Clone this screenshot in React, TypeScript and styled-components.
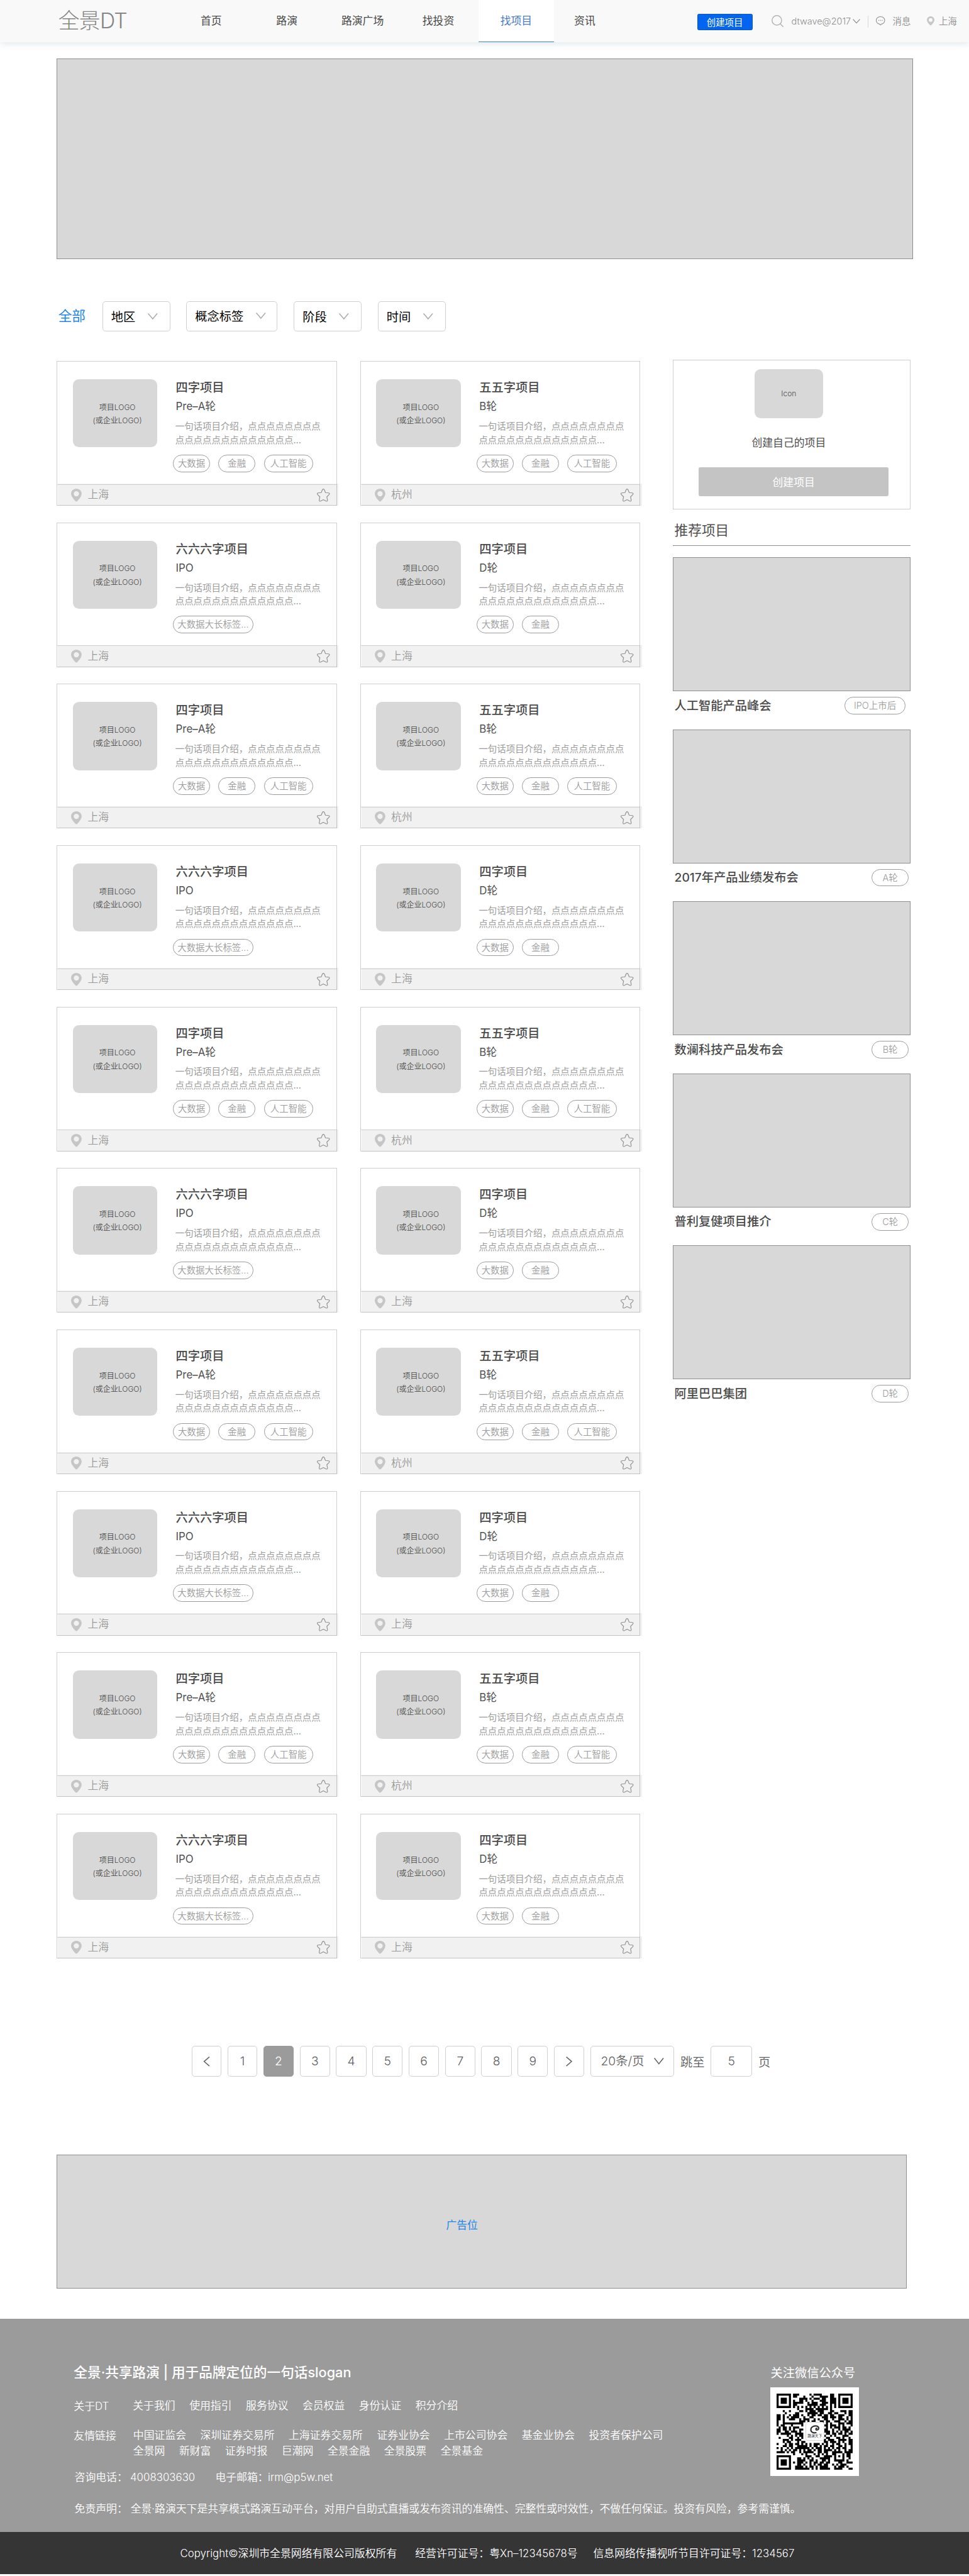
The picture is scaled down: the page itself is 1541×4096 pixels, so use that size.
import React from "react";
import styled, { createGlobalStyle } from "styled-components";

const u = (n: number) => `${Math.round(n * 60.19) / 100}px`;

const Global = createGlobalStyle`
  * { box-sizing: border-box; }
  body {
    margin: 0;
    background: #fff;
    color: #4f4f4f;
    font-family: Inter, "Noto Sans CJK SC", "Liberation Sans", sans-serif;
    overflow-x: hidden;
  }
`;

const Page = styled.div`
  width: 1541px;
  height: 4096px;
  overflow: hidden;
  display: flex;
  flex-direction: column;
  background: #fff;
`;

/* ---------- header ---------- */
const Header = styled.header`
  display: flex;
  flex: none;
  height: ${u(112)};
  background: #f9f9f9;
  box-shadow: 0 ${u(6)} ${u(16)} rgba(190, 208, 220, 0.42);
`;
const Brand = styled.div`
  width: ${u(458)};
  padding-left: ${u(154)};
  font-size: ${u(56)};
  line-height: ${u(108)};
  font-weight: 300;
  color: #858585;
  letter-spacing: ${u(-1)};
  white-space: nowrap;
`;
const Tab = styled.a<{ $w: number; $active?: boolean; $gap?: number }>`
  width: ${(p) => u(p.$w)};
  height: ${u(112)};
  margin-left: ${(p) => u(p.$gap ?? 0)};
  text-align: center;
  font-size: ${u(28)};
  line-height: ${u(112)};
  color: ${(p) => (p.$active ? "#4a7bc8" : "#4a4a4a")};
  background: ${(p) => (p.$active ? "#fff" : "transparent")};
  border-bottom: ${(p) => (p.$active ? "1px solid #4a7ecb" : "none")};
`;
const CreateButton = styled.button`
  margin: ${u(37)} 0 0 ${u(216)};
  width: ${u(146)};
  height: ${u(43)};
  padding: 0;
  border: 1px solid #1257b4;
  border-radius: ${u(4)};
  background: #0265f0;
  color: #fff;
  font: 400 ${u(24)} / ${u(42)} Inter, "Noto Sans CJK SC", sans-serif;
`;
const HeaderTools = styled.div`
  display: flex;
  align-items: center;
  height: ${u(112)};
  margin-left: ${u(50)};
  color: #8f8f8f;
  font-size: ${u(24)};
  font-weight: 350;
  white-space: nowrap;
`;
const ToolText = styled.span<{ $w: number; $ml: number }>`
  width: ${(p) => u(p.$w)};
  margin-left: ${(p) => u(p.$ml)};
  line-height: ${u(110)};
`;
const ToolDivider = styled.i<{ $ml: number }>`
  width: 1px;
  height: ${u(32)};
  margin-left: ${(p) => u(p.$ml)};
  margin-top: ${u(3)};
  background: #d8d8d8;
`;
const Icon = styled.svg<{ $w: number; $h: number; $ml?: number; $mt?: number }>`
  flex: none;
  display: block;
  width: ${(p) => u(p.$w)};
  height: ${(p) => u(p.$h)};
  margin-left: ${(p) => u(p.$ml ?? 0)};
  margin-top: ${(p) => u(p.$mt ?? 0)};
  overflow: visible;
`;

/* ---------- placeholders and filters ---------- */
const Banner = styled.div`
  flex: none;
  margin: ${u(42)} 0 0 ${u(150)};
  width: ${u(2262)};
  height: ${u(530)};
  border: 1px solid #8f8f8f;
  background: #d8d8d8;
`;
const Filters = styled.div`
  display: flex;
  flex: none;
  align-items: center;
  height: ${u(80)};
  margin: ${u(112)} 0 0 ${u(154)};
`;
const FilterAll = styled.span`
  width: ${u(116)};
  font-size: ${u(36)};
  line-height: ${u(76)};
  color: #1e86e8;
`;
const FilterBox = styled.div<{ $w: number; $gap: number; $lift?: number }>`
  display: flex;
  align-items: center;
  justify-content: space-between;
  width: ${(p) => u(p.$w)};
  height: ${u(80)};
  margin-right: ${(p) => u(p.$gap)};
  padding: 0 ${(p) => u(p.$w > 200 ? 28 : 32)} ${(p) => u(p.$lift ?? 0)} ${u(22)};
  border: 1px solid #cfcfcf;
  border-radius: ${u(8)};
  color: #000;
  font-size: ${u(32)};
`;

/* ---------- project cards ---------- */
const Main = styled.main`
  display: flex;
  flex: none;
  align-items: flex-start;
  margin: ${u(74)} 0 0 ${u(150)};
`;
const CardGrid = styled.section`
  display: grid;
  grid-template-columns: ${u(740)} ${u(740)};
  grid-auto-rows: ${u(382)};
  column-gap: ${u(62)};
  row-gap: ${u(44.4)};
  margin-top: ${u(4)};
`;
const Card = styled.article`
  display: flex;
  flex-direction: column;
  border: 1px solid #cfcfcf;
`;
const CardBody = styled.div`
  display: flex;
  height: ${u(325)};
  padding: ${u(46.4)} 0 0 ${u(40.4)};
  border-bottom: 1px solid #dcdcdc;
`;
const LogoBox = styled.div`
  width: ${u(224)};
  height: ${u(180)};
  padding: ${u(56)} 0 0 ${u(12)};
  border-radius: ${u(16)};
  background: #d8d8d8;
  color: #4a4a4a;
  font-size: ${u(20)};
  font-weight: 350;
  line-height: ${u(35.5)};
  text-align: center;
  white-space: pre;
`;
const Info = styled.div`
  display: flex;
  flex-direction: column;
  margin-left: ${u(41)};
`;
const CardTitle = styled.h3`
  margin: 0 0 0 ${u(7.5)};
  font-size: ${u(32)};
  line-height: ${u(44)};
  font-weight: 500;
  color: #4a4a4a;
`;
const Stage = styled.div`
  margin: ${u(6)} 0 0 ${u(7.5)};
  font-size: ${u(28)};
  line-height: ${u(44)};
`;
const Desc = styled.p`
  margin: ${u(12)} 0 0 ${u(6)};
  color: #9b9b9b;
  font-size: ${u(24)};
  line-height: ${u(36)};
  font-weight: 400;
  white-space: pre;
`;
const Tags = styled.div`
  display: flex;
  gap: ${u(22)};
  margin-top: ${u(21)};
`;
const Tag = styled.span<{ $w: number }>`
  width: ${(p) => u(p.$w)};
  height: ${u(46)};
  border: 1px solid #9b9b9b;
  border-radius: ${u(23)};
  color: #9b9b9b;
  font-size: ${u(24)};
  font-weight: 350;
  line-height: ${u(42)};
  text-align: center;
  white-space: nowrap;
`;
const CardFoot = styled.footer`
  display: flex;
  align-items: center;
  flex: 1;
  margin: ${u(-3)} ${u(-6)} -1px ${u(2)};
  padding: ${u(1)} ${u(23)} 0 ${u(34)};
  background: rgba(0, 0, 0, 0.055);
`;
const City = styled.span`
  flex: 1;
  margin-left: ${u(16)};
  color: #999;
  font-size: ${u(28)};
  font-weight: 350;
  line-height: ${u(56)};
`;

/* ---------- sidebar ---------- */
const Side = styled.aside`
  width: ${u(628)};
  margin-left: ${u(86)};
`;
const CreatePanel = styled.div`
  display: flex;
  flex-direction: column;
  align-items: center;
  height: ${u(396)};
  padding-top: ${u(24)};
  border: 1px solid #cfcfcf;
`;
const IconBox = styled.div`
  width: ${u(180)};
  height: ${u(130)};
  margin-right: ${u(16)};
  border-radius: ${u(16)};
  background: #d8d8d8;
  font-size: ${u(20)};
  font-weight: 350;
  line-height: ${u(130)};
  text-align: center;
`;
const CreateHint = styled.div`
  margin: ${u(42)} ${u(16)} 0 0;
  font-size: ${u(28)};
  line-height: ${u(44)};
`;
const PanelButton = styled.div`
  width: ${u(502)};
  height: ${u(76)};
  margin: ${u(43)} 0 0 ${u(10)};
  border-radius: ${u(4)};
  background: #c4c4c4;
  color: #fff;
  font-size: ${u(28)};
  line-height: ${u(80)};
  text-align: center;
`;
const SideTitle = styled.h2`
  height: ${u(96)};
  margin: 0 0 ${u(30)};
  padding-left: ${u(4)};
  border-bottom: 1px solid #8f8f8f;
  font-size: ${u(36)};
  font-weight: 400;
  line-height: ${u(110)};
`;
const Rec = styled.div`
  height: ${u(454.6)};
`;
const RecImage = styled.div`
  height: ${u(354)};
  border: 1px solid #8f8f8f;
  background: #d8d8d8;
`;
const RecRow = styled.div<{ $end: number }>`
  display: flex;
  align-items: center;
  justify-content: space-between;
  height: ${u(46)};
  margin-top: ${u(15)};
  padding: 0 ${(p) => u(p.$end)} 0 ${u(4)};
`;
const RecTitle = styled.span`
  font-size: ${u(32)};
  font-weight: 500;
  line-height: ${u(44)};
  color: #4a4a4a;
`;

/* ---------- pagination ---------- */
const Pager = styled.nav`
  display: flex;
  flex: none;
  gap: ${u(16)};
  height: ${u(80)};
  margin: ${u(232)} 0 0 ${u(506)};
  font-size: ${u(32)};
  font-weight: 350;
  line-height: ${u(80)};
  color: #5f5f5f;
`;
const PageBox = styled.span<{ $w?: number; $on?: boolean }>`
  display: flex;
  align-items: center;
  justify-content: center;
  width: ${(p) => u(p.$w ?? 80)};
  height: ${u(80)};
  border: 1px solid ${(p) => (p.$on ? "#9b9b9b" : "#cfcfcf")};
  border-radius: ${u(8)};
  background: ${(p) => (p.$on ? "#9b9b9b" : "#fff")};
  color: ${(p) => (p.$on ? "#fff" : "#5f5f5f")};
  white-space: nowrap;
`;
const PagerText = styled.span`
  line-height: ${u(88)};
`;
const AdBanner = styled.div`
  display: flex;
  flex: none;
  align-items: center;
  width: ${u(2246)};
  height: ${u(353)};
  margin: ${u(207)} 0 0 ${u(150)};
  padding: ${u(12)} 0 0 ${u(1027)};
  border: 1px solid #8f8f8f;
  background: #d8d8d8;
  color: #1e86e8;
  font-size: ${u(28)};
`;

/* ---------- footer ---------- */
const Foot = styled.footer`
  display: flex;
  flex: none;
  height: ${u(562)};
  margin-top: ${u(81)};
  padding: ${u(116)} 0 0 ${u(195)};
  background: #9b9b9b;
  color: #fff;
  font-size: ${u(28)};
  font-weight: 350;
`;
const FootInfo = styled.div`
  width: ${u(1841)};
  flex: none;
`;
const Slogan = styled.div`
  font-size: ${u(36)};
  font-weight: 500;
  line-height: ${u(52)};
  white-space: pre;
`;
const FootRow = styled.div<{ $mt: number; $pl?: number }>`
  display: flex;
  margin-top: ${(p) => u(p.$mt)};
  padding-left: ${(p) => u(p.$pl ?? 0)};
  line-height: ${u(40)};
  white-space: nowrap;
`;
const FootLabel = styled.span<{ $w: number; $dy?: number }>`
  flex: none;
  width: ${(p) => u(p.$w)};
  padding-top: ${(p) => u(p.$dy ?? 0)};
`;
const Links = styled.div`
  display: flex;
  gap: ${u(37.4)};
`;
const QrSide = styled.div`
  width: ${u(234)};
`;
const QrTitle = styled.div`
  font-size: ${u(32)};
  font-weight: 400;
  line-height: ${u(54)};
  white-space: nowrap;
`;
const QrFrame = styled.div`
  display: grid;
  place-items: center;
  width: ${u(234)};
  height: ${u(234)};
  margin-top: ${u(10)};
  background: #fff;
  & > * { grid-area: 1 / 1; }
`;
const QrBadge = styled.div`
  display: flex;
  flex-direction: column;
  align-items: center;
  width: ${u(49)};
  height: ${u(49)};
  padding-top: ${u(6)};
  border: 1px solid #d5d5d5;
  border-radius: ${u(6)};
  background: #fff;
  color: #555;
  font-size: ${u(9.6)};
  line-height: ${u(14)};
  font-weight: 500;
  white-space: nowrap;
`;
const Legal = styled.div`
  display: flex;
  flex: none;
  height: ${u(112)};
  padding-left: ${u(476)};
  background: #353535;
  color: #fff;
  font-size: ${u(28)};
  font-weight: 350;
  line-height: ${u(114)};
  white-space: nowrap;
`;
const LegalItem = styled.span<{ $w: number }>`
  flex: none;
  width: ${(p) => u(p.$w)};
`;

/* ---------- drawings ---------- */
const Chevron = ({ w, h, ml, mt, color = "#adadad", sw = 2.6 }: { w: number; h: number; ml?: number; mt?: number; color?: string; sw?: number }) => (
  <Icon $w={w} $h={h} $ml={ml} $mt={mt} viewBox={`0 0 ${w} ${h}`} fill="none" stroke={color} strokeWidth={sw}>
    <path d={`M1 1 L${w / 2} ${h - 1} L${w - 1} 1`} />
  </Icon>
);
const Arrow = ({ flip }: { flip?: boolean }) => (
  <Icon $w={16} $h={26} viewBox="0 0 16 26" fill="none" stroke="#666" strokeWidth="2.6">
    <path d={flip ? "M1 1 L15 13 L1 25" : "M15 1 L1 13 L15 25"} />
  </Icon>
);
const Pin = ({ w, h, ml }: { w: number; h: number; ml?: number }) => (
  <Icon $w={w} $h={h} $ml={ml} viewBox="0 0 28 34" fill="#c6c6c6" fillRule="evenodd">
    <path d="M14 0C6 0 0 6 0 13.5C0 19 4 25 11 32.5Q14 35.5 17 32.5C24 25 28 19 28 13.5C28 6 22 0 14 0ZM14 6.5A7 7 0 1 1 14 20.5A7 7 0 1 1 14 6.5Z" />
  </Icon>
);
const Star = () => (
  <Icon $w={34} $h={34} viewBox="0 0 34 34" fill="none" stroke="#939393" strokeWidth="2" strokeLinejoin="round">
    <path d="M14.6 2.6Q17 -.6 19.4 2.6L22.6 10.4L30.8 11.2Q34.6 12.4 32.2 15.6L26.2 21.6L28 30.4Q27.8 34.4 24.2 32.8L17 29.2L9.8 32.8Q6.2 34.4 6 30.4L7.8 21.6L1.8 15.6Q-.6 12.4 3.2 11.2L11.4 10.4Z" />
  </Icon>
);

const qrRows = [
  "#######.###.....#.####....##..#######",
  "#.....#.##...#...#...####.##..#.....#",
  "#.###.#....####.#.###.##..###.#.###.#",
  "#.###.#.#..##.#..#...###..###.#.###.#",
  "#.###.#.#####..#.###..###.###.#.###.#",
  "#.....#.##.....#####.###..#.#.#.....#",
  "#######.#.#.#.#.#.#.#.#.#.#.#.#######",
  "..........#...####.######.#..........",
  "...#..#....##.#.###.###...##...###.##",
  "....#....##....#####.##..##.##...#.##",
  "##.#..#.###.#..#.##.##.##.##..###..##",
  "##.#.#.####..#..##....###.###.##..#.#",
  "##.#..###..#.###..#.#..##..#..###.#.#",
  "#..#.......###.#.##..##.##..###..#.##",
  "#..##########.........#.#.#...###.###",
  "#.##...#....#..........##.###.#.#...#",
  ".#.##.#.###.............#.#.###.##.#.",
  "##.##.#.#..##..........##..#..#.####.",
  "##..##.###.#...........###.#.#.#.##.#",
  "#.#####..####...........##.##.##.#.##",
  ".....#.#.#.##..........#..#.#...###..",
  ".#....##..#.#...........##...##.#..#.",
  "...###.#.###...........#.###..####.##",
  "...#.##...#.##.........##.###.#.#..##",
  "#...#.##.##.#.#.#.###.#.#..#.##..#.##",
  "...##.##..#####.#.##.#.##.##..##.#..#",
  "#.#..#.#.#######.#.###.#.#.#.##.##..#",
  "..#.#.#.##.#.#.##.#.##.####.#.#..#.##",
  "####.#.##..#.#####..##.##..#####.####",
  "........#...#.#...#.#.#.#..##...#.##.",
  "#######.......###..##..####.#.#.#.##.",
  "#.....#...##.#.#.#...#####..#...#..#.",
  "#.###.#...####..##.#..##.#..#####.#..",
  "#.###.#.#.###.#.#.##.##.##....##..###",
  "#.###.#...##.#..#.#.##.##..#.#.###...",
  "#.....#..####.#.##.#.####...#.###.#..",
  "#######..#######.#.#.#####..####...##",
];
const qrPath = qrRows
  .flatMap((row, y) => [...row].map((c, x) => (c === "#" ? `M${x} ${y}h1v1h-1z` : "")))
  .join("");
const QrCode = () => (
  <Icon $w={201} $h={201} viewBox="0 0 37 37">
    <path d={qrPath} fill="#000" />
  </Icon>
);

/* ---------- data ---------- */
type Project = { title: string; stage: string; city: string; tags: [string, number][] };
const rowA: Project[] = [
  { title: "四字项目", stage: "Pre–A轮", city: "上海", tags: [["大数据", 98], ["金融", 98], ["人工智能", 130]] },
  { title: "五五字项目", stage: "B轮", city: "杭州", tags: [["大数据", 98], ["金融", 98], ["人工智能", 130]] },
];
const rowB: Project[] = [
  { title: "六六六字项目", stage: "IPO", city: "上海", tags: [["大数据大长标签...", 212]] },
  { title: "四字项目", stage: "D轮", city: "上海", tags: [["大数据", 98], ["金融", 98]] },
];
const projects = Array.from({ length: 10 }, (_, i) => (i % 2 ? rowB : rowA)).flat();
const recs: [string, string, number, number][] = [
  ["人工智能产品峰会", "IPO上市后", 162, 13],
  ["2017年产品业绩发布会", "A轮", 98, 5],
  ["数澜科技产品发布会", "B轮", 98, 5],
  ["普利复健项目推介", "C轮", 98, 5],
  ["阿里巴巴集团", "D轮", 98, 5],
];
const about = ["关于我们", "使用指引", "服务协议", "会员权益", "身份认证", "积分介绍"];
const friends1 = ["中国证监会", "深圳证券交易所", "上海证券交易所", "证券业协会", "上市公司协会", "基金业协会", "投资者保护公司"];
const friends2 = ["全景网", "新财富", "证券时报", "巨潮网", "全景金融", "全景股票", "全景基金"];
const desc = `一句话项目介绍，${"点".repeat(8)}\n${"点".repeat(13)}...`;

const LinkList = ({ items }: { items: string[] }) => (
  <Links>{items.map((t) => <span key={t}>{t}</span>)}</Links>
);

export default function App() {
  return (
    <>
      <Global />
      <Page>
        <Header>
          <Brand>全景DT</Brand>
          <Tab $w={200}>首页</Tab>
          <Tab $w={200}>路演</Tab>
          <Tab $w={200}>路演广场</Tab>
          <Tab $w={200}>找投资</Tab>
          <Tab $w={200} $gap={6} $active>找项目</Tab>
          <Tab $w={162}>资讯</Tab>
          <CreateButton>创建项目</CreateButton>
          <HeaderTools>
            <Icon $w={32} $h={32} viewBox="0 0 32 32" fill="none" stroke="#b3b3b3" strokeWidth="2.4">
              <circle cx="14" cy="14" r="12.6" />
              <path d="M22.5 22.5L31 31" />
            </Icon>
            <ToolText $w={152} $ml={21}>dtwave@2017</ToolText>
            <Chevron w={20} h={12} ml={10} color="#8f8f8f" sw={2.2} />
            <ToolDivider $ml={20} />
            <Icon $w={24} $h={24} $ml={20} viewBox="0 0 24 24" fill="none" stroke="#8f8f8f" strokeWidth="1.8">
              <path d="M12 .8C18.5 .8 23.2 5 23.2 10.500S19 19.800 14.500 20.500L12 23L9.500 20.500C5 19.800 .8 16 .8 10.500S5.500 .8 12 .8Z" />
              <path d="M6.500 10.500h2M11 10.500h2M15.500 10.500h2" strokeWidth="2" />
            </Icon>
            <ToolText $w={48} $ml={20}>消息</ToolText>
            <Pin w={20} h={24} ml={42} />
            <ToolText $w={48} $ml={12}>上海</ToolText>
          </HeaderTools>
        </Header>
        <Banner />
        <Filters>
          <FilterAll>全部</FilterAll>
          <FilterBox $w={180} $gap={42}>地区<Chevron w={26} h={16} /></FilterBox>
          <FilterBox $w={240} $gap={44} $lift={5}>概念标签<Chevron w={26} h={16} /></FilterBox>
          <FilterBox $w={180} $gap={42}>阶段<Chevron w={26} h={16} /></FilterBox>
          <FilterBox $w={180} $gap={0}>时间<Chevron w={26} h={16} /></FilterBox>
        </Filters>
        <Main>
          <CardGrid>
            {projects.map((p, i) => (
              <Card key={i}>
                <CardBody>
                  <LogoBox>{"项目LOGO\n(或企业LOGO)"}</LogoBox>
                  <Info>
                    <CardTitle>{p.title}</CardTitle>
                    <Stage>{p.stage}</Stage>
                    <Desc>{desc}</Desc>
                    <Tags>{p.tags.map(([t, w]) => <Tag key={t} $w={w}>{t}</Tag>)}</Tags>
                  </Info>
                </CardBody>
                <CardFoot>
                  <Pin w={28} h={34} />
                  <City>{p.city}</City>
                  <Star />
                </CardFoot>
              </Card>
            ))}
          </CardGrid>
          <Side>
            <CreatePanel>
              <IconBox>Icon</IconBox>
              <CreateHint>创建自己的项目</CreateHint>
              <PanelButton>创建项目</PanelButton>
            </CreatePanel>
            <SideTitle>推荐项目</SideTitle>
            {recs.map(([title, tag, w, end]) => (
              <Rec key={title}>
                <RecImage />
                <RecRow $end={end}>
                  <RecTitle>{title}</RecTitle>
                  <Tag $w={w}>{tag}</Tag>
                </RecRow>
              </Rec>
            ))}
          </Side>
        </Main>
        <Pager>
          <PageBox $w={79}><Arrow /></PageBox>
          {[1, 2, 3, 4, 5, 6, 7, 8, 9].map((n) => (
            <PageBox key={n} $w={n === 1 ? 79 : 80} $on={n === 2}>{n}</PageBox>
          ))}
          <PageBox><Arrow flip /></PageBox>
          <PageBox $w={222}>20条/页<Chevron w={26} h={17} ml={26} color="#5f5f5f" /></PageBox>
          <PagerText>跳至</PagerText>
          <PageBox $w={110}>5</PageBox>
          <PagerText>页</PagerText>
        </Pager>
        <AdBanner>广告位</AdBanner>
        <Foot>
          <FootInfo>
            <Slogan>全景·共享路演 | 用于品牌定位的一句话slogan</Slogan>
            <FootRow $mt={40}>
              <FootLabel $w={156} $dy={3}>关于DT</FootLabel>
              <LinkList items={about} />
            </FootRow>
            <FootRow $mt={35}>
              <FootLabel $w={157} $dy={2}>友情链接</FootLabel>
              <LinkList items={friends1} />
            </FootRow>
            <FootRow $mt={1} $pl={157}>
              <LinkList items={friends2} />
            </FootRow>
            <FootRow $mt={29} $pl={2}>
              <FootLabel $w={147}>咨询电话：</FootLabel>
              <FootLabel $w={225}>4008303630</FootLabel>
              <FootLabel $w={139}>电子邮箱：</FootLabel>
              <span>irm@p5w.net</span>
            </FootRow>
            <FootRow $mt={44} $pl={2}>
              <FootLabel $w={148}>免责声明：</FootLabel>
              <span>全景·路演天下是共享模式路演互动平台，对用户自助式直播或发布资讯的准确性、完整性或时效性，不做任何保证。投资有风险，参考需谨慎。</span>
            </FootRow>
          </FootInfo>
          <QrSide>
            <QrTitle>关注微信公众号</QrTitle>
            <QrFrame>
              <QrCode />
              <QrBadge>
                <Icon $w={26} $h={22} viewBox="0 0 26 22" fill="none" stroke="#333" strokeLinecap="round">
                  <path d="M16 20C8 22 2 18 2.500 11.500C3 5 11 1 18 2.500C26 5 24 13 18 13C15 12.500 15 9 18 8.500" strokeWidth="3.600" />
                </Icon>
                路演天下
              </QrBadge>
            </QrFrame>
          </QrSide>
        </Foot>
        <Legal>
          <LegalItem $w={621}>Copyright©深圳市全景网络有限公司版权所有</LegalItem>
          <LegalItem $w={470.5}>经营许可证号：粤Xn–12345678号</LegalItem>
          <span>信息网络传播视听节目许可证号：1234567</span>
        </Legal>
      </Page>
    </>
  );
}
